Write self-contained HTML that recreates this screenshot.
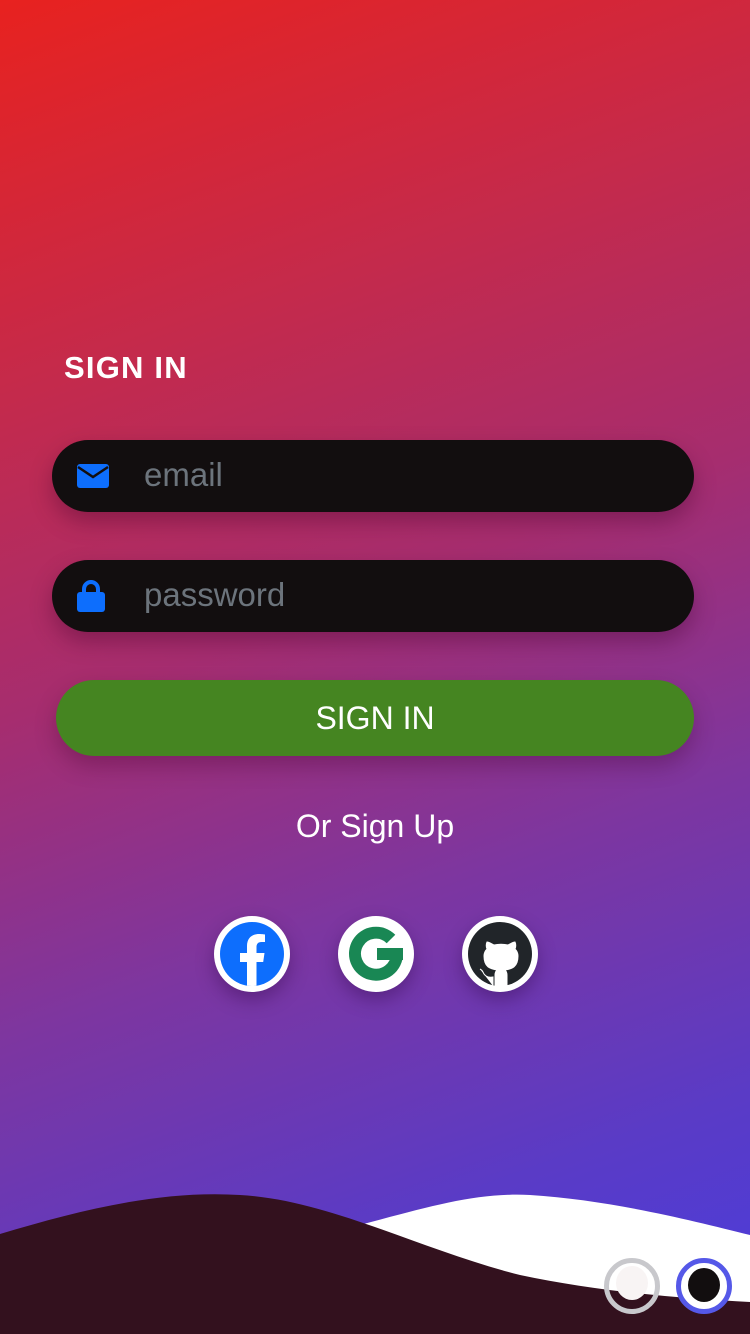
<!DOCTYPE html>
<html><head><meta charset="utf-8"><style>
html,body{margin:0;padding:0;}
body{width:750px;height:1334px;overflow:hidden;position:relative;font-family:"Liberation Sans","DejaVu Sans",sans-serif;
background:linear-gradient(160deg,#e8221f 0%,#c42a4c 25%,#a62d6f 45%,#7d36a0 65%,#5a3bc6 85%,#4a3cdc 100%);}
.t{position:absolute;left:64px;top:350px;color:#fff;font-weight:bold;font-size:31px;letter-spacing:1.2px;}
.inp{position:absolute;left:52px;width:642px;height:72px;border-radius:36px;background:#120e0f;box-shadow:0 10px 22px rgba(60,0,40,.35);}
.inp span{position:absolute;left:92px;top:16px;font-size:33px;color:#6c747c;}
.btn{position:absolute;left:56px;top:680px;width:638px;height:76px;border-radius:38px;background:#458521;color:#fff;font-size:32px;text-align:center;line-height:76px;box-shadow:0 10px 22px rgba(60,0,40,.3);}
.or{position:absolute;left:0;width:750px;top:808px;text-align:center;color:#fff;font-size:32px;}
.s{position:absolute;top:916px;width:76px;height:76px;border-radius:50%;background:#fff;box-shadow:0 8px 18px rgba(40,0,60,.35);}
.s svg{position:absolute;left:6px;top:6px;}
</style></head><body>
<div class="t">SIGN IN</div>
<div class="inp" style="top:440px">
<svg style="position:absolute;left:25px;top:24px" width="32" height="24" viewBox="0 0 32 24"><rect x="0" y="0" width="32" height="24" rx="3" fill="#0d6efd"/><path d="M1 3 L16 13 L31 3" stroke="#120e0f" stroke-width="2.5" fill="none"/></svg>
<span>email</span></div>
<div class="inp" style="top:560px">
<svg style="position:absolute;left:25px;top:20px" width="28" height="32" viewBox="0 0 28 32"><path d="M7 14 V9 a7 7 0 0 1 14 0 V14" stroke="#0d6efd" stroke-width="4" fill="none"/><rect x="0" y="12" width="28" height="20" rx="3" fill="#0d6efd"/></svg>
<span>password</span></div>
<div class="btn">SIGN IN</div>
<div class="or">Or Sign Up</div>
<div class="s" style="left:214px"><svg width="64" height="64" viewBox="0 0 64 64"><circle cx="32" cy="32" r="32" fill="#0d6efd"/><clipPath id="c"><circle cx="32" cy="32" r="32"/></clipPath><path clip-path="url(#c)" d="M27 64 V40 H20 V31 H27 V24 c0-8 5-12 12-12 c3 0 6 .5 6 .5 V20 h-3.5 c-3.5 0-5 2-5 5 V31 h8 l-1.3 9 H36.5 V64 Z" fill="#fff"/></svg></div>
<div class="s" style="left:338px"><svg width="64" height="64" viewBox="0 0 64 64"><path d="M47 17 A21 21 0 1 0 53 32" stroke="#198754" stroke-width="12" fill="none"/><rect x="33" y="26" width="26" height="12" fill="#198754"/></svg></div>
<div class="s" style="left:462px"><svg width="64" height="64" viewBox="0 0 64 64"><circle cx="32" cy="32" r="32" fill="#212529"/><path d="M25 64 V55 c-6 1-9-2-10-5 c-1-2-3-3-3-3 M39 64 V53 c0-2-1-4-2-5 c7-1 13-3 13-14 c0-3-1-5-3-7 c1-2 1-5 0-7 c-2 0-5 2-7 3 c-4-1-10-1-14 0 c-2-1-5-3-7-3 c-1 2-1 5 0 7 c-2 2-3 4-3 7 c0 11 6 13 13 14 c-1 1-2 3-2 5 V64 Z" fill="#fff" stroke="#fff" stroke-width="1"/></svg></div>
<svg style="position:absolute;left:0;top:1180px" width="750" height="154" viewBox="0 0 750 154">
<path d="M340 50 C420 30 470 12 530 15 C610 20 690 40 750 55 V154 H340 Z" fill="#fff"/>
<path d="M0 54 C80 30 160 10 240 15 C330 20 420 70 520 95 C600 112 680 118 750 122 V154 H0 Z" fill="#33111e"/>
</svg>
<div style="position:absolute;left:604px;top:1258px;width:46px;height:46px;border:5px solid #c8c8cc;border-radius:50%"></div>
<div style="position:absolute;left:616px;top:1266px;width:32px;height:34px;background:#f8f4f4;border-radius:50%"></div>
<div style="position:absolute;left:676px;top:1258px;width:46px;height:46px;border:5px solid #5558e8;border-radius:50%;background:#fff"></div>
<div style="position:absolute;left:688px;top:1268px;width:32px;height:34px;background:#120e0f;border-radius:50%"></div>
</body></html>
